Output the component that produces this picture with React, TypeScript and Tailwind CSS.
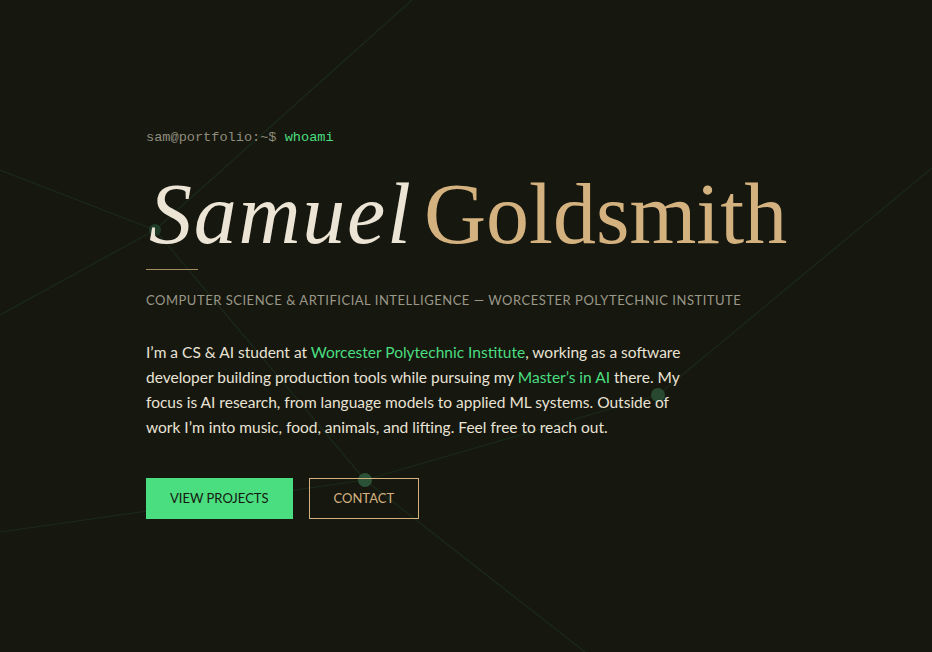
import React from "react";

const lines: [number, number, number, number][] = [
  [412, 0, 155, 230],
  [0, 170, 155, 230],
  [0, 315, 155, 230],
  [155, 230, 365, 480],
  [365, 480, 585, 652],
  [0, 532, 365, 480],
  [365, 480, 658, 395],
  [658, 395, 932, 168],
];

const nodes: [number, number, number, string][] = [
  [155, 230, 6, "#1f3a27"],
  [365, 480, 7, "#2b5236"],
  [658, 395, 7, "#28492f"],
];

function Network() {
  return (
    <svg
      className="absolute inset-0 h-full w-full"
      viewBox="0 0 932 652"
      preserveAspectRatio="none"
    >
      {lines.map(([x1, y1, x2, y2], i) => (
        <line
          key={i}
          x1={x1}
          y1={y1}
          x2={x2}
          y2={y2}
          stroke="#4ade80"
          strokeOpacity={0.09}
          strokeWidth={1.2}
        />
      ))}
      {nodes.map(([cx, cy, r, fill], i) => (
        <circle key={i} cx={cx} cy={cy} r={r} fill={fill} />
      ))}
    </svg>
  );
}

export default function App() {
  return (
    <div className="relative min-h-screen overflow-hidden bg-[#16170f]">
      <Network />
      <main className="relative flex min-h-screen items-center pb-[5px]">
        <div className="mx-auto w-[640px]">
          <p className="font-['Liberation_Mono',monospace] text-[13.6px] leading-5 text-[#8e8c7c]">
            sam@portfolio:~$ <span className="text-[#4ade80]">whoami</span>
          </p>
          <h1 className="mt-[23px] font-['Liberation_Serif',serif] text-[86px] leading-[1] whitespace-nowrap">
            <span className="ml-[3px] italic tracking-[0.02em] text-[#ece5d6]">Samuel</span>{" "}
            <span className="ml-[-10px] text-[#d4b27f]">Goldsmith</span>
          </h1>
          <div className="mt-[12px] h-px w-[52px] bg-[#a58e62]" />
          <p className="mt-[20px] whitespace-nowrap font-['Lato',sans-serif] text-[13px] uppercase leading-5 tracking-[0.04em] text-[#9a9888]">
            Computer Science &amp; Artificial Intelligence — Worcester Polytechnic Institute
          </p>
          <p className="mt-[30px] max-w-[560px] font-['Lato',sans-serif] text-[15.5px] leading-[25px] text-[#e9e3d5]">
            I’m a CS &amp; AI student at{" "}
            <span className="text-[#4ade80]">Worcester Polytechnic Institute</span>, working as a
            software developer building production tools while pursuing my{" "}
            <span className="text-[#4ade80]">Master’s in AI</span> there. My focus is AI
            research, from language models to applied ML systems. Outside of work I’m into
            music, food, animals, and lifting. Feel free to reach out.
          </p>
          <div className="mt-[38px] flex gap-4">
            <button className="h-[41px] bg-[#4ade80] px-6 font-['Lato',sans-serif] text-[13px] uppercase text-[#16170f]">
              View Projects
            </button>
            <button className="h-[41px] border border-[#d4b27f] px-6 font-['Lato',sans-serif] text-[13px] uppercase text-[#d4b27f]">
              Contact
            </button>
          </div>
        </div>
      </main>
    </div>
  );
}
